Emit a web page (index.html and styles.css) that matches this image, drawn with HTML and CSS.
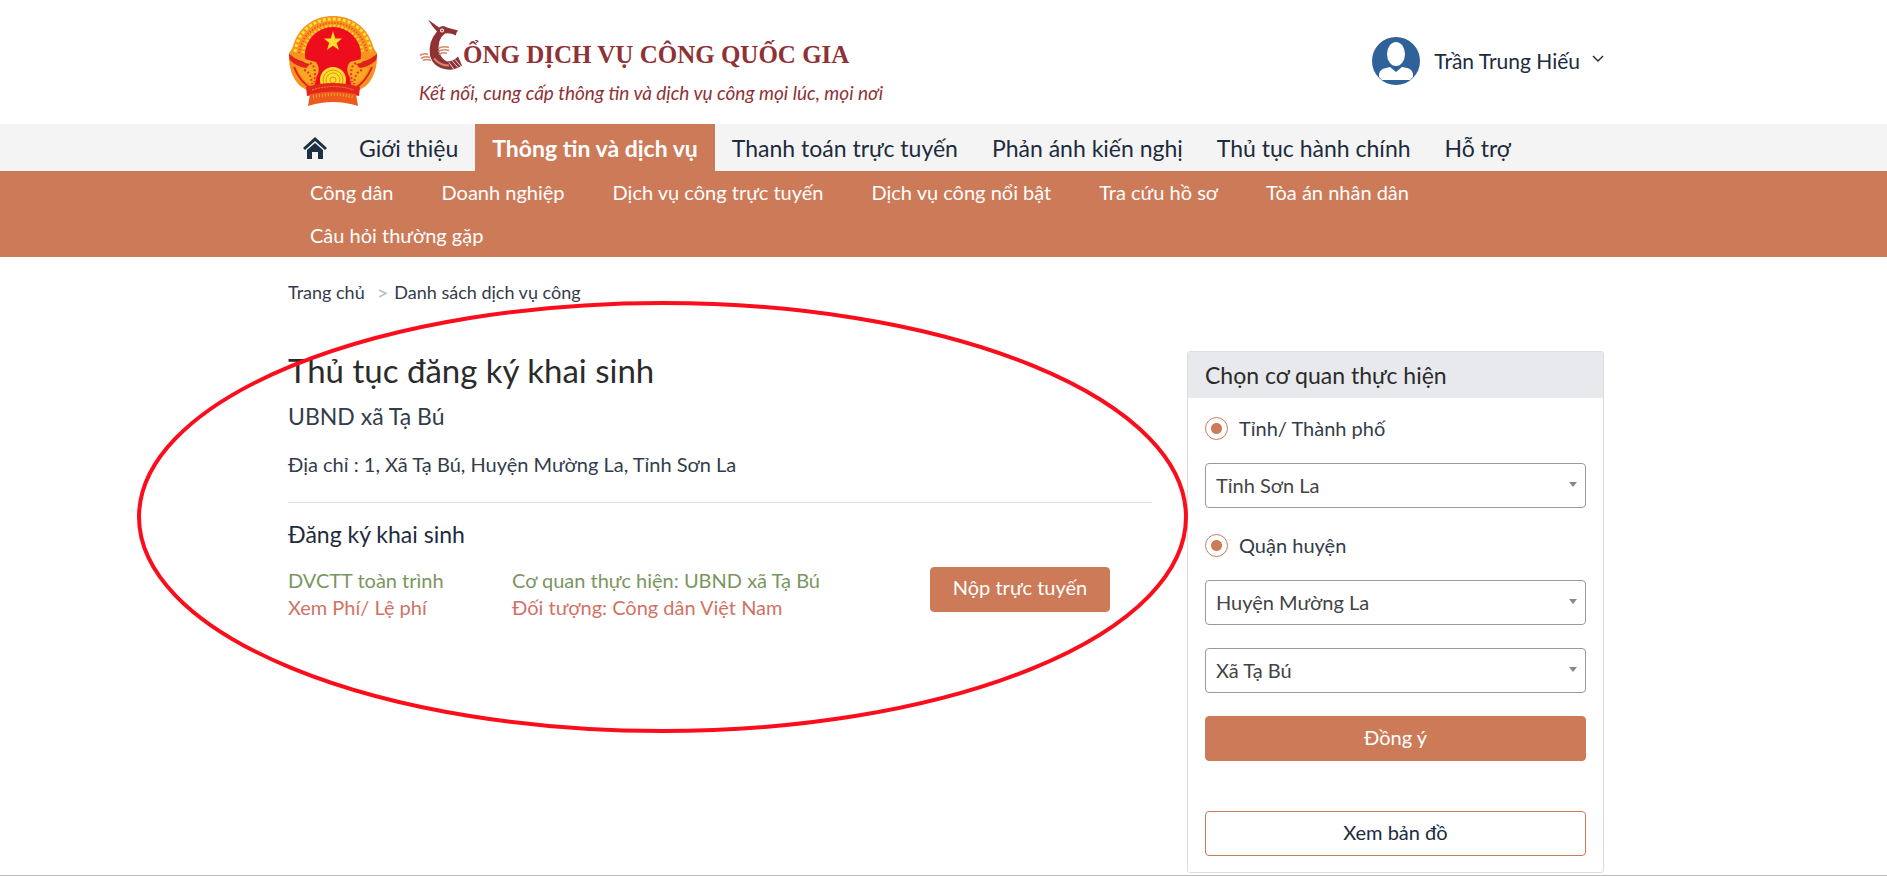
FILE: index.html
```html
<!DOCTYPE html>
<html lang="vi">
<head>
    <meta charset="UTF-8">
    <meta name="viewport" content="width=device-width, initial-scale=1.0">
    <title>Cổng Dịch vụ công Quốc gia</title>
    <link rel="stylesheet" href="styles.css">
</head>
<body>
    <header class="container header">
        <a class="brand" href="#">
            <!-- Quốc huy -->
            <svg class="emblem" viewBox="0 0 90 90" aria-hidden="true">
                <path d="M45 0 C63 0 78 10 84 27 Q86 34 89 37 Q90 58 78 70 L68 76 H22 L12 70 Q0 58 1 37 Q4 34 6 27 C12 10 27 0 45 0 Z" fill="#f7931e"/>
                <path d="M7 36 C10 14 27 3 45 3 C63 3 80 14 83 36" fill="none" stroke="#ffe23a" stroke-width="3" stroke-dasharray="3 2"/>
                <path d="M11 37 C14 18 29 7 45 7 C61 7 76 18 79 37" fill="none" stroke="#e8451c" stroke-width="2" stroke-dasharray="1 2"/>
                <path d="M15 37 C18 21 31 10 45 10 C59 10 72 21 75 37" fill="none" stroke="#ffd62e" stroke-width="3" stroke-dasharray="2 2"/>
                <circle cx="45" cy="39" r="28" fill="#ee0d1c"/>
                <path d="M30 55 H60 L64 72 H26 Z" fill="#ee0d1c"/>
                <path d="M1 38 Q10 46 23 47 L18 52 Q8 50 2 44 Z M89 38 Q80 46 67 47 L72 52 Q82 50 88 44 Z" fill="#e3201c"/>
                <path d="M6 51 Q12 66 24 73 M84 51 Q78 66 66 73" fill="none" stroke="#e3201c" stroke-width="2"/>
                <path d="M13 42 L28 46 Q32 51 30 58 L24 68 Q14 65 10 53 L20 51 Z M77 42 L62 46 Q58 51 60 58 L66 68 Q76 65 80 53 L70 51 Z" fill="#f9a822"/>
                <path d="M1 38 Q10 46 22 48 L18 52 Q8 50 2 44 Z M89 38 Q80 46 68 48 L72 52 Q82 50 88 44 Z" fill="#e3201c"/>
                <path d="M22 47 Q29 50 26 66 M16 54 Q23 56 24 68 M68 47 Q61 50 64 66 M74 54 Q67 56 66 68" fill="none" stroke="#e8351c" stroke-width="2" stroke-dasharray="2 2"/>
                <path d="M45 15 L47.3 22.6 H54 L48.8 27 L51 34 L45 29.8 L39 34 L41.2 27 L36 22.6 H42.7 Z" fill="#ffdd2d"/>
                <circle cx="45" cy="64" r="13" fill="#ffe02a"/>
                <circle cx="45" cy="64" r="10" fill="none" stroke="#ef8a1c"/>
                <circle cx="45" cy="64" r="7" fill="none" stroke="#ef8a1c"/>
                <circle cx="45" cy="64" r="3" fill="none" stroke="#ef8a1c"/>
                <path d="M18 71 Q45 63 72 71 L71 80 Q45 74 19 80 Z" fill="#e3271b"/>
                <path d="M24 74 Q45 67 66 74" fill="none" stroke="#f9862a" stroke-dasharray="2 1"/>
                <path d="M22 78 Q45 73 68 78 L70 90 Q45 82 20 90 Z" fill="#ee5a1e"/>
                <path d="M25 81 Q45 76 65 81" fill="none" stroke="#fba62a" stroke-width="3" stroke-dasharray="1 2"/>
            </svg>
            <div class="brand-text">
                <div class="brand-name">
                    <svg class="bird" viewBox="0 0 44 51" aria-hidden="true">
                        <path d="M9 0 L20 8 Q24 5 28 8 L39 11 Q37 13 37 16 Q31 13 26 14 Q18 20 20 32 Q22 39 28 42 Q34 42 39 37 L43 46 Q36 51 28 50 Q14 48 11 36 Q9 22 18 12 Q13 7 9 0 Z" fill="#8f3236"/>
                        <circle cx="23" cy="11" r="2" fill="#fff"/>
                        <circle cx="23" cy="11" r="1" fill="#8f3236"/>
                        <path d="M33 41 L39 48 M36 40 L42 47 M30 43 L35 50" stroke="#fff" stroke-width="0.8"/>
                        <path d="M15 39 Q21 46 30 46" fill="none" stroke="#d58868" stroke-width="2"/>
                        <path d="M1 36 Q5 33 9 35 M2 39 Q6 36 11 38 M4 41 Q8 39 12 41 M19 29 Q24 26 30 28 M19 32 Q24 29 30 31 M20 35 Q24 32 28 34" fill="none" stroke="#d58868" stroke-width="1.6"/>
                    </svg>
                    <span>ỔNG DỊCH VỤ CÔNG QUỐC GIA</span>
                </div>
                <div class="slogan">Kết nối, cung cấp thông tin và dịch vụ công mọi lúc, mọi nơi</div>
            </div>
        </a>
        <button class="user" type="button">
            <svg class="avatar" viewBox="0 0 48 48" aria-hidden="true">
                <circle cx="24" cy="24" r="24" fill="#2f6299"/>
                <ellipse cx="24" cy="17" rx="9" ry="12" fill="#fff"/>
                <path d="M7 40 V37 Q8 32 14 31 L18 30 L24 35 L30 30 L35 31 Q40 32 41 37 V40 L38 43 H10 Z" fill="#fff"/>
            </svg>
            <span>Trần Trung Hiếu</span>
            <svg class="chevron" viewBox="0 0 12 12" aria-hidden="true"><path d="M1 1 L6 6 L11 1" fill="none" stroke="#212738" stroke-width="1.4"/></svg>
        </button>
    </header>

    <!-- Menu chính -->
    <nav class="nav">
        <div class="container nav-list">
            <a class="home" href="#" aria-label="Trang chủ">
                <svg viewBox="0 0 24 22" aria-hidden="true">
                    <path d="M0 11 L12 0 L24 11 L22 13 L12 4 L2 13 Z M4 13 L12 6 L20 13 V22 H15 V15 H9 V22 H4 Z" fill="#1d3042"/>
                </svg>
            </a>
            <a href="#">Giới thiệu</a>
            <a class="active" href="#">Thông tin và dịch vụ</a>
            <a href="#">Thanh toán trực tuyến</a>
            <a href="#">Phản ánh kiến nghị</a>
            <a href="#">Thủ tục hành chính</a>
            <a href="#">Hỗ trợ</a>
        </div>
    </nav>
    <nav class="subnav">
        <div class="container subnav-list">
            <a href="#">Công dân</a>
            <a href="#">Doanh nghiệp</a>
            <a href="#">Dịch vụ công trực tuyến</a>
            <a href="#">Dịch vụ công nổi bật</a>
            <a href="#">Tra cứu hồ sơ</a>
            <a href="#">Tòa án nhân dân</a>
            <a href="#">Câu hỏi thường gặp</a>
        </div>
    </nav>

    <div class="container breadcrumb">
        <a href="#">Trang chủ</a>
        <span class="sep">&gt;</span>
        <a href="#">Danh sách dịch vụ công</a>
    </div>

    <div class="container content">
        <main class="main">
            <h1>Thủ tục đăng ký khai sinh</h1>
            <p class="agency">UBND xã Tạ Bú</p>
            <p class="address">Địa chỉ : 1, Xã Tạ Bú, Huyện Mường La, Tỉnh Sơn La</p>
            <h2>Đăng ký khai sinh</h2>
            <div class="service">
                <div>
                    <div class="green">DVCTT toàn trình</div>
                    <a class="red" href="#">Xem Phí/ Lệ phí</a>
                </div>
                <div>
                    <div class="green">Cơ quan thực hiện: UBND xã Tạ Bú</div>
                    <div class="red">Đối tượng: Công dân Việt Nam</div>
                </div>
                <button class="btn" type="button">Nộp trực tuyến</button>
            </div>
            <!-- Khoanh vùng thủ tục -->
            <svg class="ring" viewBox="0 0 1050 432" preserveAspectRatio="none" aria-hidden="true">
                <ellipse cx="525" cy="216" rx="523" ry="214" fill="none" stroke="#fc0d1b" stroke-width="4"/>
            </svg>
        </main>

        <aside class="card">
            <h3>Chọn cơ quan thực hiện</h3>
            <form class="form">
                <label class="radio"><input type="radio" name="province-level" checked>Tỉnh/ Thành phố</label>
                <div class="select">
                    <select aria-label="Tỉnh/ Thành phố"><option>Tỉnh Sơn La</option></select>
                </div>
                <label class="radio"><input type="radio" name="district-level" checked>Quận huyện</label>
                <div class="select">
                    <select aria-label="Quận huyện"><option>Huyện Mường La</option></select>
                </div>
                <div class="select">
                    <select aria-label="Xã"><option>Xã Tạ Bú</option></select>
                </div>
                <button class="btn" type="button">Đồng ý</button>
                <button class="btn outline" type="button">Xem bản đồ</button>
            </form>
        </aside>
    </div>
</body>
</html>
```
FILE: styles.css
```css
:root {
    --main: #cd7a58;
    --dark: #1d2b3e;
    --text: #333c4a;
    --maroon: #8f3236;
}
* { box-sizing: border-box; }
body {
    margin: 0;
    font: 20px/28px Lato, "Noto Sans", sans-serif;
    color: var(--text);
    background-color: #fff;
    min-height: 100vh;
    border-bottom: 1px solid #bbb;
    overflow-x: hidden;
}
a { color: inherit; text-decoration: none; }
button, select { font: inherit; color: inherit; }
h1, h2, h3, p { margin: 0; font-weight: 400; }
.container { max-width: 1321px; margin: 0 auto; padding-left: 5px; }

.header { display: flex; justify-content: space-between; align-items: center; height: 124px; padding-bottom: 3px; }
.brand { display: flex; align-items: center; gap: 41px; color: var(--maroon); }
.emblem { width: 90px; height: 90px; }
.brand-text { padding-top: 4px; }
.brand-name {
    display: flex;
    align-items: center;
    height: 52px;
    font: bold 25px/30px "Liberation Serif", serif;
}
.brand-name span { padding-top: 20px; }
.bird { width: 44px; height: 52px; }
.slogan { font-size: 19px; font-style: italic; line-height: 28px; padding-top: 8px; }
.user { display: flex; align-items: center; padding: 0; border: 0; background: none; gap: 14px; font-size: 21px; color: var(--dark); }
.avatar { width: 48px; height: 48px; }
.chevron { width: 12px; height: 12px; margin-left: -2px; }

.nav { background-color: #f4f4f4; color: var(--dark); }
.nav-list { display: flex; }
.nav a { padding: 2px 17px 0; font-size: 23px; line-height: 45px; }
.nav .home { display: flex; align-items: center; padding: 0 15px; }
.home svg { width: 24px; height: 22px; }
.nav .active { background-color: var(--main); color: #fff; font-weight: 700; }

.subnav { background-color: var(--main); color: #fff; }
.subnav-list { display: flex; flex-wrap: wrap; padding-left: 3px; }
.subnav a { padding: 0 24px; line-height: 43px; }

.breadcrumb { display: flex; gap: 6px; padding-top: 21px; font-size: 18px; }
.sep { margin-left: 6px; font-size: 20px; color: #bbb; }

.content {
    display: grid;
    grid-template-columns: 1fr 417px;
    gap: 35px;
    align-items: start;
    padding-top: 45px;
}
.main { position: relative; }
.main h1 { font-size: 33px; line-height: 38px; color: #2b2b2b; }
.agency { font-size: 23px; padding-top: 13px; }
.address { padding: 20px 0 24px; border-bottom: 1px solid #e0e0e0; }
.main h2 { font-size: 23px; padding-top: 17px; color: var(--dark); }
.service { display: grid; grid-template-columns: 224px 1fr 180px; padding: 19px 42px 0 0; line-height: 27px; }
.green { color: #7a9660; }
.red { color: #cf7365; }
.ring {
    position: absolute;
    top: -50px;
    left: -151px;
    width: calc(100% + 187px);
    height: 432px;
    pointer-events: none;
}

.btn {
    height: 45px;
    padding: 0 0 4px;
    border: 1px solid var(--main);
    border-radius: 4px;
    background-color: var(--main);
    color: #fff;
}
.outline { margin-top: 50px; background-color: #fff; color: var(--dark); }

.card { border: 1px solid #ddd; border-radius: 3px; }
.card h3 { padding: 0 17px; font-size: 23px; line-height: 46px; background-color: #e7e9ec; color: #2b2b2b; }
.form { display: flex; flex-direction: column; padding: 16px 17px 16px; }
.radio { display: flex; align-items: center; gap: 11px; margin-bottom: 21px; }
.radio input {
    appearance: none;
    width: 23px;
    height: 23px;
    margin: 0;
    border: 1px solid var(--main);
    border-radius: 50%;
    background: radial-gradient(var(--main) 5px, transparent 6px);
}
.select { position: relative; margin-bottom: 23px; }
.select select {
    appearance: none;
    display: block;
    width: 100%;
    height: 45px;
    padding: 0 10px 2px;
    border: 1px solid #999;
    border-radius: 4px;
    background-color: #fff;
    color: #444;
}
.select::after {
    content: "";
    position: absolute;
    right: 9px;
    top: 19px;
    border: 4px solid transparent;
    border-top: 5px solid #888;
}
```
